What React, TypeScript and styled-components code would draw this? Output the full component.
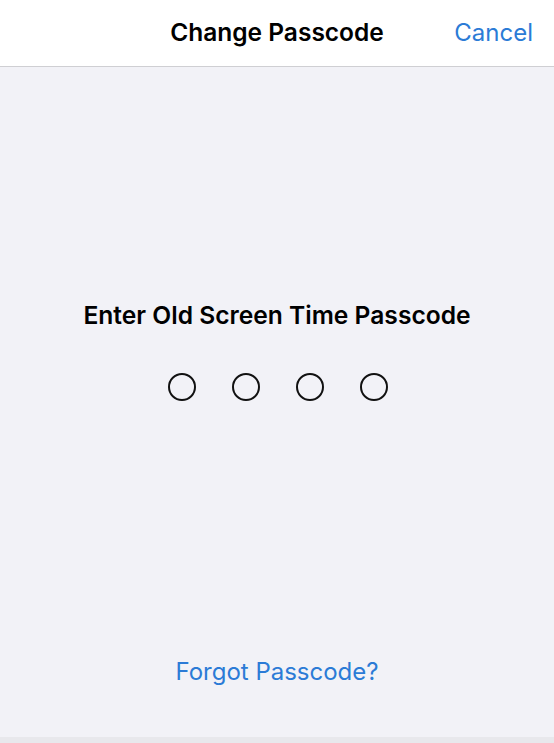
import React from "react";
import styled, { createGlobalStyle } from "styled-components";

const GlobalStyle = createGlobalStyle`
	html, body {
		margin: 0;
		padding: 0;
		background: #f2f2f7;
	}
	body {
		font-family: Inter, "Noto Sans", "Liberation Sans", sans-serif;
		-webkit-font-smoothing: antialiased;
	}
`;

const Screen = styled.div`
	display: flex;
	flex-direction: column;
	height: 743px;
	width: 554px;
	overflow: hidden;
`;

const NavBar = styled.header`
	align-items: center;
	background: #ffffff;
	border-bottom: 1px solid #cfcfd3;
	box-sizing: border-box;
	display: grid;
	grid-template-columns: 1fr auto 1fr;
	height: 67px;
	padding: 0 21px 2px;
`;

const NavTitle = styled.h1`
	color: #000;
	font-size: 24.5px;
	font-weight: 600;
	grid-column: 2;
	margin: 0;
`;

const NavButton = styled.button`
	background: none;
	border: none;
	color: #2b7bd6;
	cursor: pointer;
	font: inherit;
	font-size: 24px;
	justify-self: end;
	padding: 0;
`;

const Content = styled.main`
	align-items: center;
	background: #f2f2f7;
	display: flex;
	flex: 1;
	flex-direction: column;
	padding: 233px 0 50px;
`;

const Prompt = styled.h2`
	color: #000;
	font-size: 24.6px;
	font-weight: 600;
	line-height: 30px;
	margin: 0 0 43px;
`;

const Dots = styled.div`
	display: flex;
	gap: 36px;
	margin-left: 2px;
`;

const Dot = styled.span<{ $filled?: boolean }>`
	background: ${(p) => (p.$filled ? "#000" : "transparent")};
	border: 2px solid #111;
	border-radius: 50%;
	box-sizing: border-box;
	height: 28px;
	width: 28px;
`;

const Spacer = styled.div`
	flex: 1;
`;

const LinkButton = styled.button`
	background: none;
	border: none;
	color: #2b7bd6;
	cursor: pointer;
	font: inherit;
	font-size: 24px;
	line-height: 30px;
	padding: 0;
`;

const BottomEdge = styled.div`
	background: #e8e8ec;
	height: 6px;
`;

export default function App() {
	const entered = 0;
	return (
		<>
			<GlobalStyle />
			<Screen>
				<NavBar>
					<NavTitle>Change Passcode</NavTitle>
					<NavButton>Cancel</NavButton>
				</NavBar>
				<Content>
					<Prompt>Enter Old Screen Time Passcode</Prompt>
					<Dots>
						{[0, 1, 2, 3].map((i) => (
							<Dot key={i} $filled={i < entered} />
						))}
					</Dots>
					<Spacer />
					<LinkButton>Forgot Passcode?</LinkButton>
				</Content>
				<BottomEdge />
			</Screen>
		</>
	);
}
